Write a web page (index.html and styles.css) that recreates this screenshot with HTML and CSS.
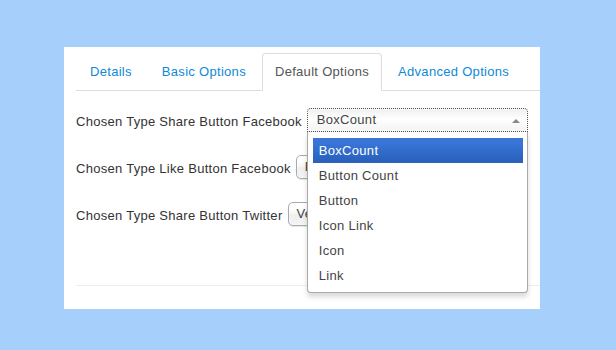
FILE: index.html
```html
<!DOCTYPE html>
<html lang="en">
<head>
<meta charset="UTF-8" />
<title>Share Button Options</title>
<link rel="stylesheet" href="styles.css">
</head>
<body>

<div class="panel">
  <ul class="tabs">
    <li><a href="#">Details</a></li>
    <li><a href="#">Basic Options</a></li>
    <li class="active"><a href="#">Default Options</a></li>
    <li><a href="#">Advanced Options</a></li>
  </ul>

  <div class="tab-content">
    <div class="field">
      <label>Chosen Type Share Button Facebook</label>
      <div class="chosen open">
        <a class="chosen-single" href="#">BoxCount<span class="arrow"></span></a>
        <div class="chosen-drop">
          <ul class="chosen-results">
            <li class="highlighted">BoxCount</li>
            <li>Button Count</li>
            <li>Button</li>
            <li>Icon Link</li>
            <li>Icon</li>
            <li>Link</li>
          </ul>
        </div>
      </div>
    </div>

    <div class="field">
      <label>Chosen Type Like Button Facebook</label>
      <div class="chosen">
        <a class="chosen-single" href="#">Button</a>
      </div>
    </div>

    <div class="field">
      <label>Chosen Type Share Button Twitter</label>
      <div class="chosen">
        <a class="chosen-single" href="#">Vertical</a>
      </div>
    </div>
  </div>

  <div class="divider"></div>
</div>

</body>
</html>
```

FILE: styles.css
```css
body {
  margin: 0;
  background-color: #a7cffb;
  font-family: "Liberation Sans", Arial, sans-serif;
  font-size: 13px;
  color: #333;
}

.panel {
  margin: 47px 0 0 64px;
  width: 476px;
  height: 262px;
  padding: 6px 0 0 12px;
  box-sizing: border-box;
  background-color: #fff;
}

.tabs {
  list-style: none;
  margin: 0;
  padding: 0;
  display: flex;
  border-bottom: 1px solid #ddd;
}

.tabs li {
  margin: 0 2px -1px 0;
}

.tabs a {
  display: block;
  padding: 8px 13px;
  line-height: 20px;
  letter-spacing: 0.3px;
  border: 1px solid transparent;
  border-radius: 4px 4px 0 0;
  color: #0e8ad6;
  text-decoration: none;
}

.tabs li.active a {
  padding: 8px 12px;
  color: #555;
  background-color: #fff;
  border-color: #ddd #ddd transparent;
}

.tab-content {
  display: flex;
  flex-direction: column;
  gap: 23px;
  padding-top: 17px;
}

.field {
  display: flex;
  align-items: center;
  height: 24px;
}

.field label {
  letter-spacing: 0.28px;
  margin-right: 5px;
  padding-top: 2px;
  white-space: nowrap;
}

.chosen {
  position: relative;
  width: 221px;
  flex-shrink: 0;
}

.chosen-single {
  display: block;
  position: relative;
  height: 24px;
  line-height: 22px;
  padding-left: 8px;
  box-sizing: border-box;
  border: 1px solid #aaa;
  border-radius: 5px;
  background: linear-gradient(#fff 20%, #f6f6f6 50%, #eee 52%, #f4f4f4 100%);
  box-shadow: 0 0 3px #fff inset, 0 1px 1px rgba(0, 0, 0, 0.1);
  color: #444;
  text-decoration: none;
  letter-spacing: 0.3px;
  white-space: nowrap;
  overflow: hidden;
}

.chosen.open {
  z-index: 10;
}

.chosen.open .chosen-single {
  border: 1px dotted #555;
  border-radius: 4px 4px 0 0;
  background: linear-gradient(#efefef, #fff 45%, #f3f3f3);
  padding-left: 9px;
}

.arrow {
  position: absolute;
  right: 7px;
  top: 10px;
  width: 0;
  height: 0;
  border-left: 4px solid transparent;
  border-right: 4px solid transparent;
  border-bottom: 4px solid #888;
}

.chosen-drop {
  position: absolute;
  top: 100%;
  left: 0;
  right: 0;
  padding: 6px 4px 4px 5px;
  background-color: #fff;
  border: 1px solid #aaa;
  border-top: 0;
  border-radius: 0 0 4px 4px;
  box-shadow: 0 4px 5px rgba(0, 0, 0, 0.15);
}

.chosen-results {
  list-style: none;
  margin: 0;
  padding: 0;
}

.chosen-results li {
  padding: 5px 6px;
  line-height: 15px;
  color: #444;
  letter-spacing: 0.3px;
}

.chosen-results li.highlighted {
  color: #fff;
  background: linear-gradient(#3875d7 20%, #2a62bc 90%);
}

.divider {
  margin-top: 59px;
  border-top: 1px solid #eee;
}
```
